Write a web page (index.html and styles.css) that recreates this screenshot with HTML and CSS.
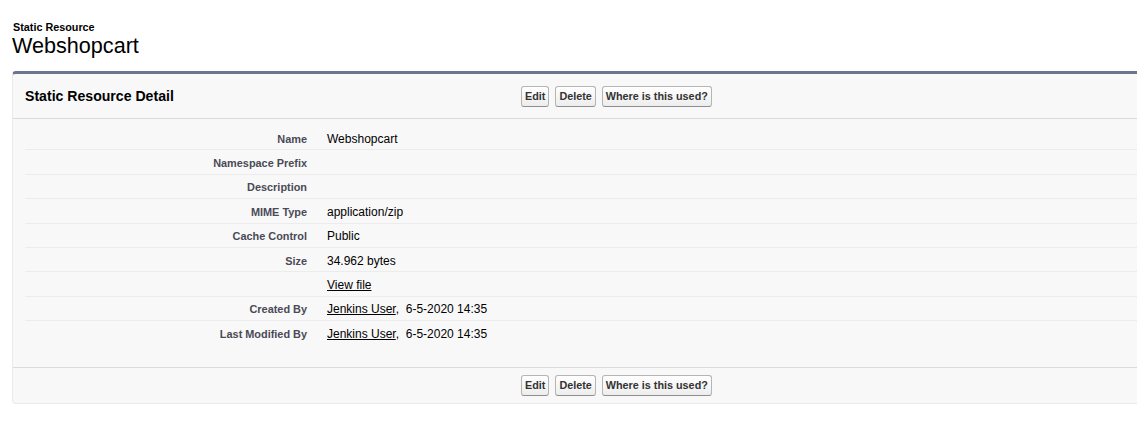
FILE: index.html
```html
<!DOCTYPE html>
<html lang="en">
<head>
<meta charset="utf-8">
<title>Static Resource: Webshopcart</title>
<link rel="stylesheet" href="styles.css">
</head>
<body>
<div class="page">
  <div class="page-header">
    <div class="page-type">Static Resource</div>
    <h1 class="page-title">Webshopcart</h1>
  </div>

  <div class="block">
    <div class="block-header">
      <h2 class="block-title">Static Resource Detail</h2>
      <div class="buttons">
        <button class="btn">Edit</button>
        <button class="btn">Delete</button>
        <button class="btn">Where is this used?</button>
      </div>
    </div>

    <div class="block-body">
      <div class="row"><div class="label">Name</div><div class="value">Webshopcart</div></div>
      <div class="row"><div class="label">Namespace Prefix</div><div class="value"></div></div>
      <div class="row"><div class="label">Description</div><div class="value"></div></div>
      <div class="row"><div class="label">MIME Type</div><div class="value">application/zip</div></div>
      <div class="row"><div class="label">Cache Control</div><div class="value">Public</div></div>
      <div class="row"><div class="label">Size</div><div class="value">34.962 bytes</div></div>
      <div class="row"><div class="label"></div><div class="value"><a href="#">View file</a></div></div>
      <div class="row"><div class="label">Created By</div><div class="value"><a href="#">Jenkins User</a>,&nbsp; 6-5-2020 14:35</div></div>
      <div class="row row-last"><div class="label">Last Modified By</div><div class="value"><a href="#">Jenkins User</a>,&nbsp; 6-5-2020 14:35</div></div>
    </div>

    <div class="block-footer">
      <div class="footer-spacer"></div>
      <div class="buttons">
        <button class="btn">Edit</button>
        <button class="btn">Delete</button>
        <button class="btn">Where is this used?</button>
      </div>
    </div>
  </div>
</div>
</body>
</html>
```

FILE: styles.css
```css
html, body {
  margin: 0;
  padding: 0;
  background: #ffffff;
  overflow: hidden;
}

body {
  font-family: "Liberation Sans", Arial, Helvetica, sans-serif;
  font-size: 12px;
  color: #000000;
}

.page {
  padding: 21px 0 0 12px;
}

.page-header {
  margin-bottom: 13px;
}

.page-type {
  font-size: 10.8px;
  font-weight: bold;
  color: #000000;
  line-height: 12px;
  padding-left: 1px;
}

.page-title {
  margin: 0;
  font-size: 21.6px;
  font-weight: normal;
  line-height: 25px;
  color: #000000;
}

.block {
  margin-right: -20px;
  background: #f8f8f8;
  border: 1px solid #eaeaea;
  border-top: 3px solid #6c7590;
  border-radius: 4px;
}

.block-header {
  display: flex;
  align-items: center;
  height: 44px;
  padding-left: 12px;
  border-bottom: 1px solid #dbdbdb;
}

.block-title {
  margin: 0;
  width: 496px;
  font-size: 14.1px;
  font-weight: bold;
  color: #000000;
}

.buttons {
  display: flex;
  gap: 6px;
}

.btn {
  font-family: "Liberation Sans", Arial, Helvetica, sans-serif;
  font-size: 10.8px;
  font-weight: bold;
  color: #333333;
  height: 21px;
  padding: 0 3px;
  margin: 0;
  line-height: 19px;
  background: linear-gradient(#ffffff, #ededed);
  border: 1px solid #b5b5b5;
  border-bottom-color: #8f8f8f;
  border-radius: 3px;
  cursor: pointer;
}

.block-body {
  padding: 7px 0 21px 12px;
}

.row {
  display: flex;
  align-items: center;
  height: 24.4px;
  padding-top: 2px;
  border-bottom: 1px solid #ececec;
  box-sizing: border-box;
}

.row-last {
  border-bottom: none;
}

.label {
  width: 282px;
  padding-right: 10px;
  text-align: right;
  font-size: 10.9px;
  font-weight: bold;
  color: #4a4a56;
  flex-shrink: 0;
}

.value {
  padding-left: 10px;
  font-size: 12px;
  color: #000000;
}

.value a {
  color: #000000;
  text-decoration: underline;
}

.block-footer {
  display: flex;
  align-items: center;
  height: 35px;
  padding-left: 12px;
  border-top: 1px solid #dbdbdb;
}

.footer-spacer {
  width: 496px;
}
```
